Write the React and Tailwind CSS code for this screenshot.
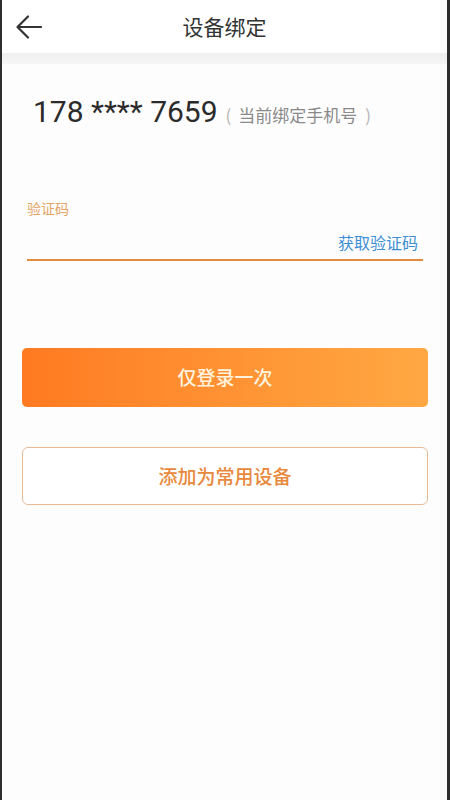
import React from "react";

const cjk = "font-['Noto_Sans_CJK_SC','Noto_Sans',sans-serif]";

function BackArrow() {
  return (
    <svg width="27" height="26" viewBox="0 0 27 26" fill="none">
      <path
        d="M26 13H2.5M13 2.5L2.5 13L13 23.5"
        stroke="#333333"
        strokeWidth="2.2"
        strokeLinecap="round"
        strokeLinejoin="round"
      />
    </svg>
  );
}

export default function App() {
  return (
    <div
      className={`min-h-[800px] w-[450px] bg-[#fdfdfd] border-l-2 border-r-[3px] border-[#2e2e2e] ${cjk}`}
    >
      {/* header */}
      <div className="grid h-[53px] grid-cols-[1fr_auto_1fr] items-center bg-white">
        <div className="pl-[13px] pt-[1px]">
          <BackArrow />
        </div>
        <div className="text-[21px] leading-none text-[#333333]">设备绑定</div>
        <div />
      </div>
      <div className="h-[11px] bg-gradient-to-b from-[#efefef] to-[#f6f6f6]" />

      {/* bound phone */}
      <div className="mt-[34px] flex items-baseline px-[31px]">
        <span className="font-['Roboto',sans-serif] text-[30px] leading-[28px] text-[#2b2b2b]">
          178 **** 7659
        </span>
        <span className="ml-[8px] text-[17px] leading-[28px] text-[#8a8a8a]">
          <span className="text-[#b5b5b5]">(</span>
          <span className="ml-[7px]">当前绑定手机号</span>
          <span className="ml-[8px] text-[#b5b5b5]">)</span>
        </span>
      </div>

      {/* code field */}
      <div className="ml-[25px] mr-[24px] mt-[72px]">
        <div className="text-[14px] leading-[15px] text-[#e3a565]">验证码</div>
        <div className="mt-[18px] flex justify-end border-b-2 border-[#e38a3c] pb-[9px] pr-[5px]">
          <span className="text-[16px] leading-[16px] text-[#3c8ed3]">获取验证码</span>
        </div>
      </div>

      {/* actions */}
      <div className="ml-[20px] mr-[19px] mt-[87px] flex flex-col gap-[40px]">
        <button className="flex h-[59px] items-center justify-center rounded-[5px] bg-gradient-to-r from-[#ff7a20] to-[#ffa843] text-[19px] font-medium text-[#fff3df]">
          仅登录一次
        </button>
        <button className="flex h-[58px] items-center justify-center rounded-[6px] border-[1.5px] border-[#e9b994] bg-white text-[19px] font-medium text-[#e8883c]">
          添加为常用设备
        </button>
      </div>
    </div>
  );
}
